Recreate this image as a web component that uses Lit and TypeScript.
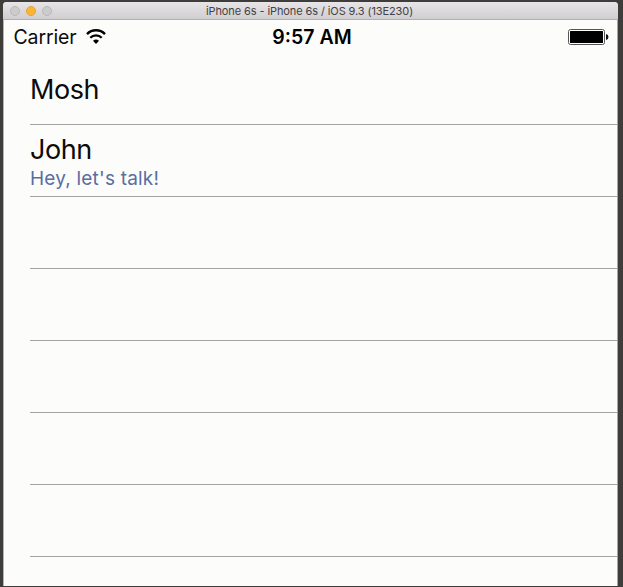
import { LitElement, html, css, svg } from "lit";
import { customElement } from "lit/decorators.js";

interface Contact {
  name?: string;
  status?: string;
}

const wifi = svg`
  <path d="M1 5.1 A12.6 12.6 0 0 1 19 5.1" fill="none" stroke="#000" stroke-width="2.4"/>
  <path d="M4.3 8.8 A8.1 8.1 0 0 1 15.7 8.8" fill="none" stroke="#000" stroke-width="2.3"/>
  <path d="M10 15 L7 11.8 A4.6 4.6 0 0 1 13 11.8 Z" fill="#000"/>`;

@customElement("app-root")
export class AppRoot extends LitElement {
  static styles = css`
    :host {
      display: block;
      box-sizing: border-box;
      height: 587px;
      padding: 2px 5px 1px 3px;
      background: #3e3d3b;
      font-family: Inter, "Liberation Sans", sans-serif;
      color: #0b0b0b;
      overflow: hidden;
    }
    .window {
      display: flex;
      flex-direction: column;
      box-sizing: border-box;
      height: 584px;
      background: #fcfcfa;
      border-radius: 4px 4px 0 0;
      overflow: hidden;
      box-shadow: inset 1px 0 #b5b5b3, inset -1px 0 #a5a5a3;
    }
    .titlebar {
      display: grid;
      grid-template-columns: 1fr auto 1fr;
      align-items: center;
      box-sizing: border-box;
      height: 18px;
      flex: none;
      background: linear-gradient(#e7e5e7, #d1ced1);
      border-bottom: 1px solid #b3b0b3;
    }
    .lights {
      display: flex;
      gap: 6px;
      padding: 0 0 0 6.5px;
    }
    .light {
      box-sizing: border-box;
      width: 10.3px;
      height: 10.3px;
      border-radius: 50%;
      background: #cdcccd;
      border: 1px solid #b9b7b8;
    }
    .amber {
      background: #fdb633;
      border-color: #e5a136;
    }
    .title {
      font-size: 11px;
      line-height: 17px;
      padding: 1px 2px 0 0;
      white-space: nowrap;
      color: #434143;
      letter-spacing: -0.1px;
    }
    .status {
      display: grid;
      grid-template-columns: 1fr auto 1fr;
      align-items: center;
      height: 33px;
      flex: none;
      padding: 0 9px 0 10px;
      font-size: 19.5px;
      line-height: 33px;
    }
    .carrier {
      display: flex;
      align-items: center;
      gap: 9px;
    }
    .label {
      padding: 2px 0 0 0.5px;
      line-height: 31px;
      letter-spacing: -0.12px;
    }
    .wifi {
      width: 20px;
      height: 16px;
    }
    .time {
      font-weight: 600;
      padding: 2px 0 0 2px;
      line-height: 31px;
      color: #000;
    }
    .battery {
      justify-self: end;
      width: 41px;
      height: 16px;
    }
    .list {
      padding-left: 27px;
    }
    .row {
      display: flex;
      flex-direction: column;
      box-sizing: border-box;
      height: 72px;
      border-bottom: 1px solid #a4a4a2;
    }
    .name {
      font-size: 27px;
      line-height: 32px;
      margin-top: 21px;
      letter-spacing: -0.45px;
    }
    .detailed .name {
      margin-top: 9px;
    }
    .message {
      font-size: 19px;
      line-height: 24px;
      margin-top: 1px;
      letter-spacing: 0.2px;
      color: #5a6da3;
    }
  `;

  private contacts: Contact[] = [
    { name: "Mosh" },
    { name: "John", status: "Hey, let's talk!" },
    {}, {}, {}, {}, {},
  ];

  render() {
    return html`
      <div class="window">
        <div class="titlebar">
          <div class="lights">
            <span class="light"></span><span class="light amber"></span><span class="light"></span>
          </div>
          <span class="title">iPhone 6s - iPhone 6s / iOS 9.3 (13E230)</span>
        </div>
        <div class="status">
          <div class="carrier">
            <span class="label">Carrier</span>
            <svg class="wifi" viewBox="0 0 20 16">${wifi}</svg>
          </div>
          <span class="time">9:57 AM</span>
          <svg class="battery" viewBox="0 0 41 16">
            <rect x=".5" y=".5" width="36" height="15" rx="2" fill="#fcfcfa" stroke="#555"/>
            <rect x="2" y="2" width="33" height="12" rx=".5" fill="#000"/>
            <path d="M38 5 Q40.5 5.5 40.5 8 T38 11 Z" fill="#111"/>
          </svg>
        </div>
        <div class="list">
          ${this.contacts.map(
            (c) => html`<div class="row ${c.status ? "detailed" : ""}">
              ${c.name ? html`<span class="name">${c.name}</span>` : ""}
              ${c.status ? html`<span class="message">${c.status}</span>` : ""}
            </div>`
          )}
        </div>
      </div>
    `;
  }
}
